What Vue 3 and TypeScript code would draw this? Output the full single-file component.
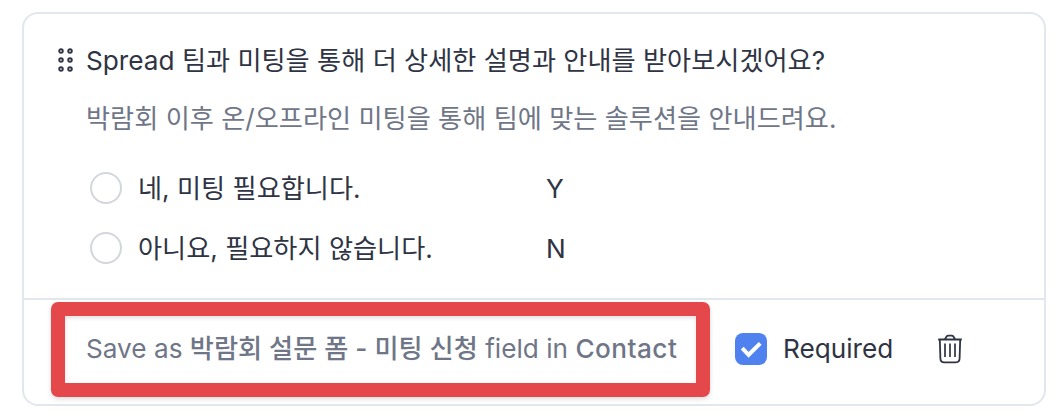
<script setup lang="ts">
interface Choice {
  label: string
  value: string
}

const choices: Choice[] = [
  { label: '네, 미팅 필요합니다.', value: 'Y' },
  { label: '아니요, 필요하지 않습니다.', value: 'N' },
]

const dots = [3, 12, 21].flatMap((y) => [3, 12].map((x) => ({ x, y })))
</script>

<template>
  <main class="page">
    <section class="card">
      <div class="question">
        <header class="heading">
          <svg class="grip" width="15" height="24" viewBox="0 0 15 24" aria-hidden="true">
            <circle v-for="(d, i) in dots" :key="i" :cx="d.x" :cy="d.y" r="1.8" />
          </svg>
          <h1 class="title">Spread 팀과 미팅을 통해 더 상세한 설명과 안내를 받아보시겠어요?</h1>
        </header>
        <p class="description">박람회 이후 온/오프라인 미팅을 통해 팀에 맞는 솔루션을 안내드려요.</p>
        <ul class="choices">
          <li v-for="c in choices" :key="c.value" class="choice">
            <span class="radio"></span>
            <span class="label">{{ c.label }}</span>
            <span class="value">{{ c.value }}</span>
          </li>
        </ul>
      </div>
      <footer class="footer">
        <div class="highlight">
          <p class="mapping">Save as <b>박람회 설문 폼 - 미팅 신청</b> field in <b class="object">Contact</b></p>
        </div>
        <span class="checkbox">
          <svg width="32" height="32" viewBox="0 0 32 32" aria-hidden="true">
            <path d="M7.2 15.2 L13.6 21.8 L25.2 10.4" />
          </svg>
        </span>
        <span class="required">Required</span>
        <svg class="trash" width="26" height="30" viewBox="0 0 26 30" aria-hidden="true">
          <path d="M1.2 5.5H24.8M8 5L9.6 2.6Q10.2 1.7 11.4 1.7H14.6Q15.8 1.7 16.4 2.6L18 5" />
          <path d="M2.8 5.5L3.4 24.5Q3.6 28.3 7 28.3H19Q22.4 28.3 22.6 24.5L23.2 5.5" />
          <path class="slats" d="M8 9.5V23M13 9.5V23M18 9.5V23" />
        </svg>
      </footer>
    </section>
  </main>
</template>

<style>
body {
  margin: 0;
  background: #fff;
}
</style>

<style scoped>
.page {
  box-sizing: border-box;
  height: 420px;
  padding: 12px 10px 0 22px;
  background: #fff;
  font-family: Inter, "Noto Sans CJK KR", sans-serif;
  font-size: 26.2px;
  line-height: 40px;
  color: #2f3444;
  white-space: nowrap;
}
.card {
  box-sizing: border-box;
  height: 394px;
  border: 2px solid #e2e7ee;
  border-radius: 16px;
}
.question {
  box-sizing: border-box;
  height: 284px;
  padding: 26px 0 0 34px;
}
.heading {
  display: flex;
  align-items: center;
  height: 40px;
}
.grip {
  width: 15px;
  margin-right: 13px;
  fill: none;
  stroke: #2f3444;
  stroke-width: 1.9;
}
.title {
  margin: 0;
  padding-top: 2px;
  font-size: inherit;
  font-weight: 400;
}
.description {
  margin: 19px 0 0 28px;
  color: #6f7687;
}
.choices {
  margin: 19px 0 0 32px;
  padding: 0;
  list-style: none;
}
.choice {
  display: flex;
  align-items: center;
  height: 60px;
}
.radio {
  box-sizing: border-box;
  width: 32px;
  height: 32px;
  border: 2px solid #d3d6dc;
  border-radius: 50%;
}
.label {
  width: 408px;
  margin-left: 16px;
  padding-top: 2px;
}
.value {
  padding-top: 2px;
}
.footer {
  display: flex;
  align-items: center;
  box-sizing: border-box;
  height: 106px;
  padding-left: 27px;
  border-top: 2px solid #e2e7ee;
}
.highlight {
  display: flex;
  align-items: center;
  box-sizing: border-box;
  width: 659px;
  height: 95px;
  margin-bottom: 6px;
  padding-left: 21px;
  border: 14px solid #e5484b;
  border-radius: 7px;
  box-shadow: 0 2px 5px rgba(0, 0, 0, 0.14), inset 0 2px 4px rgba(0, 0, 0, 0.12);
}
.mapping {
  margin: 0;
  color: #6f7687;
}
.mapping b {
  font-weight: 500;
}
.mapping .object {
  letter-spacing: 0.45px;
}
.checkbox {
  width: 32px;
  height: 32px;
  margin: 0 16px 6px 25px;
  border-radius: 8px;
  background: #4f82ee;
}
.checkbox svg {
  display: block;
  fill: none;
  stroke: #fff;
  stroke-width: 4;
}
.required {
  width: 154px;
  margin-bottom: 6px;
}
.trash {
  margin-bottom: 6px;
  fill: none;
  stroke: #2f3444;
  stroke-width: 1.8;
}
.slats {
  stroke-width: 1.7;
}
</style>
